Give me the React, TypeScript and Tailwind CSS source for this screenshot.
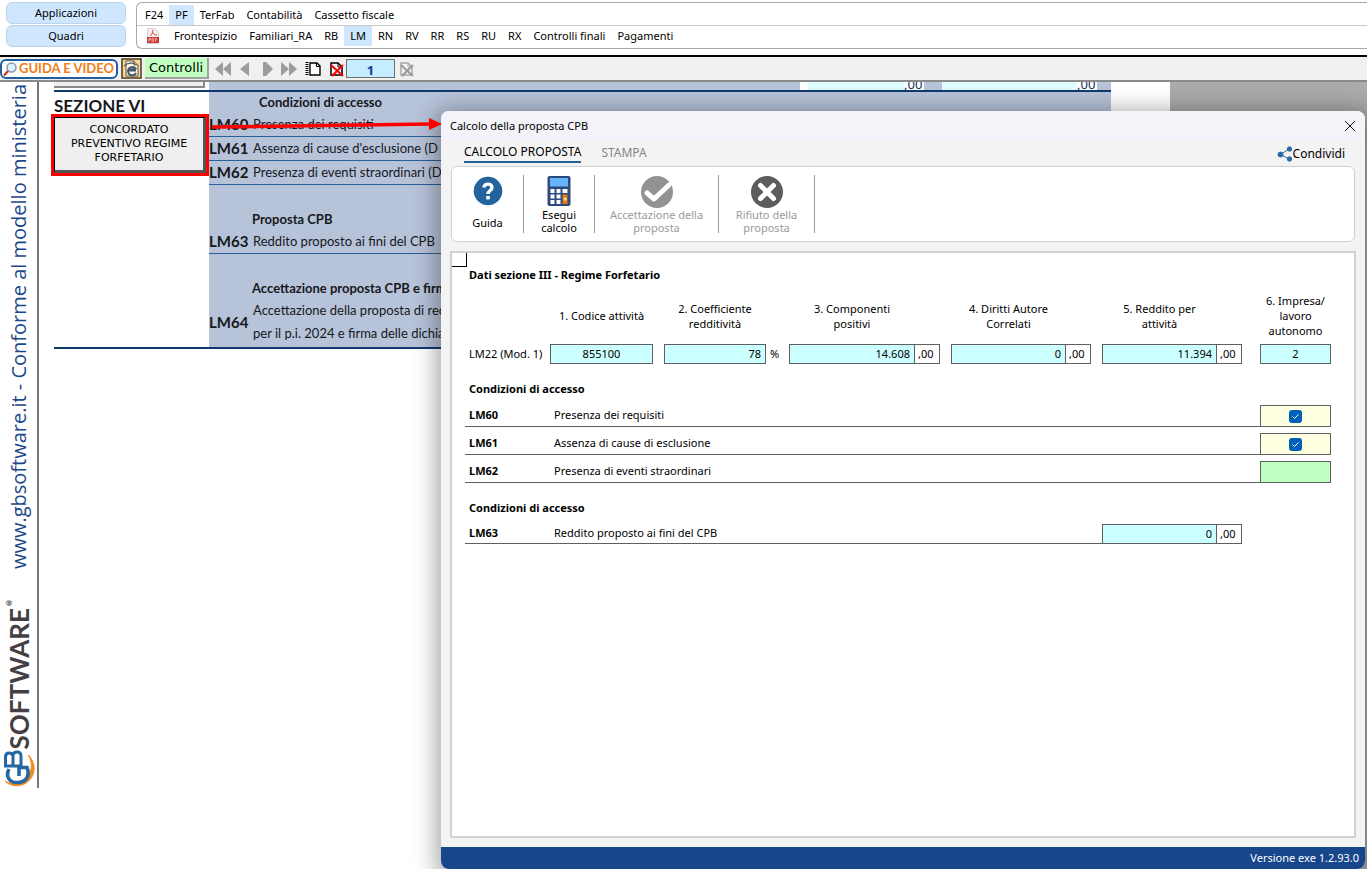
import { ReactNode, useState } from "react"
import clsx from "clsx"

const APPS = ["F24", "PF", "TerFab", "Contabilità", "Cassetto fiscale"]
const QUADRI = ["Frontespizio", "Familiari_RA", "RB", "LM", "RN", "RV", "RR", "RS", "RU", "RX", "Controlli finali", "Pagamenti"]

export default function App() {
  return (
    <div className="flex h-screen flex-col overflow-hidden bg-white font-['Noto_Sans','Open_Sans',sans-serif] text-[11px] text-black">
      <Header />
      <Toolbar />
      <div className="relative flex min-h-0 flex-1 overflow-hidden">
        <SideBrand />
        <ModelForm />
        <div className="grow bg-[#ababab]" />
        <CpbDialog />
        <svg className="pointer-events-none absolute left-[208px] top-[34px] h-[18px] w-[234px]" viewBox="0 0 234 18" aria-hidden="true">
          <path d="M4 11 L223 8" stroke="#f00" strokeWidth="3.5" />
          <path d="M221 2 L234 8 L221 14 Z" fill="#f00" />
        </svg>
      </div>
    </div>
  )
}

function Header() {
  const [app, setApp] = useState("PF")
  const [quadro, setQuadro] = useState("LM")

  return (
    <header className="flex h-[55px] shrink-0 items-start gap-2.5 pl-1.5 pt-0.5">
      <div className="flex w-[120px] shrink-0 flex-col gap-px">
        <button className="h-[22px] rounded-md border border-[#bcd3ea] bg-[#cfe6ff]">Applicazioni</button>
        <button className="h-[22px] rounded-md border border-[#bcd3ea] bg-[#cfe6ff]">Quadri</button>
      </div>
      <nav className="min-w-0 flex-1 rounded-l-md border border-r-0 border-[#a8a8a8]">
        <div className="flex border-b border-[#c8c8c8] pl-0.5 pt-0.5">
          {APPS.map((t) => (
            <TabButton key={t} label={t} active={t === app} onClick={() => setApp(t)} />
          ))}
        </div>
        <div className="flex pb-0.5 pl-2.5">
          <button aria-label="PDF" className="mr-[9px] h-5 w-3">
            <PdfIcon />
          </button>
          {QUADRI.map((t) => (
            <TabButton key={t} label={t} active={t === quadro} onClick={() => setQuadro(t)} />
          ))}
        </div>
      </nav>
    </header>
  )
}

function TabButton({ label, active, onClick }: { label: string; active: boolean; onClick: () => void }) {
  return (
    <button onClick={onClick} className={clsx("h-5 whitespace-nowrap px-1.5", active && "bg-[#cfe6ff]")}>
      {label}
    </button>
  )
}

function Toolbar() {
  return (
    <div className="flex h-[27px] shrink-0 items-center border-b-2 border-t-2 border-b-[#8a8a8a] border-t-black bg-[#f0f0f0]">
      <button className="flex h-5 w-[118px] shrink-0 items-center gap-px rounded-md border-2 border-[#1f5f9f] bg-white font-['Lato',sans-serif] text-[13px] font-bold text-[#f07d14]">
        <svg className="size-4 shrink-0" viewBox="0 0 16 16" fill="none" aria-hidden="true">
          <circle cx="9.5" cy="6.5" r="4.5" fill="#dff1fc" stroke="#7f9db8" strokeWidth="1.5" />
          <path d="M6 10 L2 14.5" stroke="#d8352a" strokeWidth="2.4" />
        </svg>
        <span className="whitespace-nowrap">GUIDA E VIDEO</span>
      </button>
      <button aria-label="Internet" className="ml-[3px] size-[21px] shrink-0">
        <svg viewBox="0 0 21 21" aria-hidden="true">
          <rect x="1" y="1" width="19" height="19" fill="#f6d795" stroke="#4b3a1c" strokeWidth="1.5" />
          <path d="M5 3 H13 L17 7 V18 H5 Z" fill="#fff8e4" stroke="#5b5142" />
          <path d="M13 3 V7 H17" fill="#cfc4a8" stroke="#5b5142" />
          <path d="M15 15 A4.2 4.2 0 1 1 14.5 10.5 L7 12.5 H15" fill="none" stroke="#46586b" strokeWidth="2" />
          <path d="M3 8 C7 4 12 5 14 6" fill="none" stroke="#46586b" strokeWidth="1.2" />
        </svg>
      </button>
      <button className="ml-[3px] h-[21px] w-16 shrink-0 border-b-2 border-r-2 border-[#a3a3a3] bg-[#c1ffc1] font-['DejaVu_Sans',sans-serif] text-[13px] leading-5">
        Controlli
      </button>
      <div className="ml-1.5 flex shrink-0 items-center gap-1.5 text-[#9c9c9c]">
        <NavButton label="Primo" d="M8 0 V14 L0 7 Z M16 0 V14 L8 7 Z" />
        <NavButton label="Precedente" d="M12 0 V14 L3 7 Z" />
        <NavButton label="Successivo" d="M4 0 H7 L14 7 L7 14 H4 Z" />
        <NavButton label="Ultimo" d="M0 0 V14 L8 7 Z M8 0 V14 L16 7 Z" />
      </div>
      <button aria-label="Nuovo modulo" className="ml-2 size-4 shrink-0">
        <svg viewBox="0 0 16 16" fill="none" aria-hidden="true">
          <path d="M5 2 H12 L15 5 V14 H5 Z" fill="#fff" stroke="#000" strokeWidth="1.4" />
          <path d="M11.5 2 V5.5 H15" stroke="#000" />
          <path d="M2 1 V15" stroke="#000" strokeWidth="3" strokeDasharray="1 1" />
        </svg>
      </button>
      <button aria-label="Elimina modulo" className="ml-2 size-4 shrink-0">
        <DeletePageIcon page="#000" cross="#f00" />
      </button>
      <input
        aria-label="Modulo"
        defaultValue="1"
        className="ml-px h-[19px] w-[49px] shrink-0 border border-[#6f6f6f] bg-[#c5ecff] pt-0.5 text-center text-[13px] font-bold leading-4 text-[#0b3f9e]"
      />
      <button aria-label="Annulla" disabled className="ml-1 size-4 shrink-0">
        <DeletePageIcon page="#a8a8a8" cross="#999" />
      </button>
    </div>
  )
}

function NavButton({ label, d }: { label: string; d: string }) {
  return (
    <button aria-label={label} className="h-3.5 w-4">
      <svg viewBox="0 0 16 14" fill="currentColor" aria-hidden="true">
        <path d={d} />
      </svg>
    </button>
  )
}

function SideBrand() {
  return (
    <aside className="flex w-[54px] shrink-0 flex-col">
      <div className="flex h-[706px] w-[39px] flex-col items-center justify-end border-r-2 border-[#777]">
        <span className="rotate-180 whitespace-nowrap font-['Open_Sans',sans-serif] text-[20px] leading-6 text-[#1d4789] [writing-mode:vertical-rl]">
          www.gbsoftware.it - Conforme al modello ministeria
        </span>
        <span className="mt-7 flex rotate-180 items-start font-['Lato',sans-serif] text-[26px] font-bold leading-7 text-[#453f43] [writing-mode:vertical-rl]">
          SOFTWARE
          <span className="text-[8px] leading-2">®</span>
        </span>
        <svg className="h-[39px] w-9 shrink-0" viewBox="0 0 36 39" fill="none" aria-label="GB">
          <path d="M4 32 C13 41 31 37 33 21 C33.5 15 31 10 27.5 6 C30 11 31 15 30 20 C28 34 14 38 4 32 Z" fill="#f08a1c" stroke="#f08a1c" />
          <path d="M8 20 C4 28 9 34 17 33.500 C26 33 29 26 26 18.500 H18 V27" stroke="#2468a2" strokeWidth="3.6" />
          <path d="M3 17 H20 V7 Q20 3 16 3 Q12 3 12 7 V17 M12 8 Q12 4 8 4 Q4.500 4 4.500 8 V17" stroke="#2468a2" strokeWidth="3" />
        </svg>
      </div>
    </aside>
  )
}

function ModelForm() {
  return (
    <main className="flex w-[1116px] shrink-0 flex-col pr-[59px] font-['Lato',sans-serif] text-[13px] text-[#16181d]">
      <div className="flex h-2 shrink-0">
        <div className="w-[155px] shrink-0 pr-1">
          <div className="h-1.5 border-b-2 border-r-2 border-[#8a8a8a] bg-[#efefef]" />
        </div>
        <div className="flex flex-1 justify-end overflow-hidden bg-[#b7c3d9] leading-2">
          <AmountStrip className="w-[124px] pl-2" />
          <span className="w-[18px]" />
          <AmountStrip className="w-[155px]" />
          <span className="w-3.5" />
        </div>
      </div>
      <div className="flex h-[259px] shrink-0 border-b-2 border-t-2 border-[#0f3a6e]">
        <div className="w-[155px] shrink-0">
          <h2 className="pt-0.5 text-[17px] font-bold leading-6">SEZIONE VI</h2>
          <button className="-ml-[3px] -mt-1 block h-[62px] w-[158px] border-3 border-[#f00] font-['DejaVu_Sans',sans-serif] text-[11px] leading-3.5 text-black">
            <span className="flex h-full items-center justify-center border border-b-3 border-r-3 border-b-[#555] border-l-black border-r-[#555] border-t-black bg-[#efefef]">
              CONCORDATO
              <br />
              PREVENTIVO REGIME
              <br />
              FORFETARIO
            </span>
          </button>
        </div>
        <div className="flex flex-1 flex-col bg-[#b7c3d9]">
          <FormRow code="LM60" title="Condizioni di accesso" indent>Presenza dei requisiti</FormRow>
          <FormRow code="LM61">Assenza di cause d'esclusione (D</FormRow>
          <FormRow code="LM62">Presenza di eventi straordinari (D</FormRow>
          <div className="h-6" />
          <FormRow code="LM63" title="Proposta CPB">Reddito proposto ai fini del CPB</FormRow>
          <div className="h-6" />
          <FormRow code="LM64" title="Accettazione proposta CPB e firma" last>
            Accettazione della proposta di reddito
            <br />
            per il p.i. 2024 e firma delle dichiarazioni
          </FormRow>
        </div>
      </div>
    </main>
  )
}

function AmountStrip({ className }: { className: string }) {
  return (
    <span className={clsx("flex bg-white", className)}>
      <span className="flex-1 bg-[#defbfd]" />
      <span className="w-5 -translate-y-0.5 font-['Noto_Sans',sans-serif] text-[#16345c]">,00</span>
    </span>
  )
}

interface FormRowProps {
  code: string
  title?: string
  indent?: boolean
  last?: boolean
  children: ReactNode
}

function FormRow({ code, title, indent, last, children }: FormRowProps) {
  return (
    <div className={clsx("whitespace-nowrap", !last && "border-b border-[#2c5f96]")}>
      {title && <h3 className={clsx("font-bold leading-[21px]", indent ? "pl-[50px]" : "pl-[43px]")}>{title}</h3>}
      <div className="flex items-center leading-[23px]">
        <b className="w-11 text-[15px]">{code}</b>
        <span>{children}</span>
      </div>
    </div>
  )
}

function CpbDialog() {
  return (
    <section
      role="dialog"
      aria-label="Calcolo della proposta CPB"
      className="absolute bottom-0 left-[441px] right-0.5 top-[29px] flex flex-col overflow-hidden rounded-lg bg-[#f3f3f3] shadow-[0_4px_22px_6px_rgba(0,0,0,0.32)]"
    >
      <div className="flex h-[30px] shrink-0 items-center justify-between bg-[#f3f3f9] pl-[9px] pr-[7px]">
        <h1>Calcolo della proposta CPB</h1>
        <button aria-label="Chiudi" className="size-4 p-0.5">
          <svg viewBox="0 0 12 12" fill="none" stroke="#111" aria-hidden="true">
            <path d="M1 1 L11 11 M11 1 L1 11" />
          </svg>
        </button>
      </div>

      <div className="flex h-[25px] shrink-0 items-start justify-between pl-[23px] pr-5 text-[12px]">
        <div role="tablist" className="flex gap-5 pt-0.5">
          <button role="tab" aria-selected="true" className="h-5 border-b-2 border-[#22639e] leading-[18px]">CALCOLO PROPOSTA</button>
          <button role="tab" aria-selected="false" className="h-5 leading-[18px] text-[#858585]">STAMPA</button>
        </div>
        <button className="flex items-center pt-1">
          <ShareIcon />
          Condividi
        </button>
      </div>

      <div className="mx-2.5 flex h-[76px] shrink-0 items-center rounded-md border border-[#cfcfcf] bg-white">
        <ToolButton className="w-[72px]" icon={<HelpIcon />}>
          <span className="pt-1">Guida</span>
        </ToolButton>
        <ToolButton className="w-[71px]" icon={<CalculatorIcon />}>Esegui<br />calcolo</ToolButton>
        <ToolButton className="w-[124px]" icon={<AcceptIcon />} disabled>Accettazione della<br />proposta</ToolButton>
        <ToolButton className="w-24" icon={<RejectIcon />} disabled>Rifiuto della<br />proposta</ToolButton>
      </div>

      <div className="m-[9px] min-h-0 flex-1 overflow-hidden border-2 border-[#d1d1d1] bg-white">
        <div className="h-3.5 w-[15px] border-b border-r border-black" />
        <div className="pl-[13px] pr-[23px]">
          <h2 className="pl-1 font-bold leading-4">Dati sezione III - Regime Forfetario</h2>
          <IncomeTable />

          <h2 className="pb-px pl-1 pt-4 font-bold leading-[18px]">Condizioni di accesso</h2>
          <ConditionRow id="lm60" code="LM60" text="Presenza dei requisiti" checked />
          <ConditionRow id="lm61" code="LM61" text="Assenza di cause di esclusione" checked />
          <ConditionRow id="lm62" code="LM62" text="Presenza di eventi straordinari" />

          <h2 className="pb-[7px] pl-1 pt-4 font-bold leading-[18px]">Condizioni di accesso</h2>
          <div className="mr-[89px] flex items-end">
            <label htmlFor="lm63" className="flex h-5 flex-1 items-center border-b border-[#5f5f5f] pl-1">
              <b className="w-[85px]">LM63</b>
              Reddito proposto ai fini del CPB
            </label>
            <div className="w-[140px]">
              <Amount id="lm63" label="Reddito proposto" value="0" />
            </div>
          </div>
        </div>
      </div>

      <footer className="h-[22px] shrink-0 bg-[#18468b] px-1.5 text-right leading-[22px] text-white">Versione exe 1.2.93.0</footer>
    </section>
  )
}

function ToolButton({ icon, children, className, disabled }: { icon: ReactNode; children: ReactNode; className: string; disabled?: boolean }) {
  return (
    <button
      disabled={disabled}
      className={clsx("flex h-[58px] flex-col items-center border-r border-[#9a9a9a] pt-px leading-[13px] disabled:text-[#9b9b9b]", className)}
    >
      {icon}
      {children}
    </button>
  )
}

function IncomeTable() {
  return (
    <table className="mt-2 w-full table-fixed">
      <colgroup>
        <col className="w-[85px]" />
        <col className="w-[114px]" />
        <col className="w-[125px]" />
        <col className="w-[162px]" />
        <col className="w-[151px]" />
        <col className="w-[158px]" />
        <col className="w-[71px]" />
      </colgroup>
      <thead>
        <tr className="h-[49px] leading-[15px]">
          <td />
          <th scope="col" className="pr-[11px] font-normal">1. Codice attività</th>
          <th scope="col" className="pr-[23px] font-normal">2. Coefficiente<br />redditività</th>
          <th scope="col" className="pr-9 font-normal">3. Componenti<br />positivi</th>
          <th scope="col" className="pr-9 font-normal">4. Diritti Autore<br />Correlati</th>
          <th scope="col" className="pr-[43px] font-normal">5. Reddito per<br />attività</th>
          <th scope="col" className="font-normal">6. Impresa/<br />lavoro<br />autonomo</th>
        </tr>
      </thead>
      <tbody>
        <tr>
          <th scope="row" className="whitespace-nowrap pl-1 pt-1 text-left font-normal">LM22 (Mod. 1)</th>
          <td className="pr-[11px] pt-1">
            <Field label="Codice attività" value="855100" align="text-center" />
          </td>
          <td className="pt-1">
            <div className="flex items-center pr-2.5">
              <Field label="Coefficiente redditività" value="78" align="text-right" />
              <span className="w-[13px] shrink-0 pl-1">%</span>
            </div>
          </td>
          <td className="pr-[11px] pt-1"><Amount id="componenti" label="Componenti positivi" value="14.608" /></td>
          <td className="pr-[11px] pt-1"><Amount id="diritti" label="Diritti Autore Correlati" value="0" /></td>
          <td className="pr-[18px] pt-1"><Amount id="reddito" label="Reddito per attività" value="11.394" /></td>
          <td className="pt-1"><Field label="Impresa/lavoro autonomo" value="2" align="text-center" /></td>
        </tr>
      </tbody>
    </table>
  )
}

function Field({ id, label, value, align }: { id?: string; label: string; value: string; align: string }) {
  return (
    <input
      id={id}
      aria-label={label}
      defaultValue={value}
      className={clsx("block h-5 w-full min-w-0 border border-[#5f5f5f] bg-[#ccffff] px-1 pb-0.5", align)}
    />
  )
}

// integer part plus the fixed cents box
function Amount({ id, label, value }: { id: string; label: string; value: string }) {
  return (
    <div className="flex">
      <Field id={id} label={label} value={value} align="text-right" />
      <span className="h-5 w-[25px] shrink-0 border border-l-0 border-[#5f5f5f] bg-white pl-[3px] leading-[18px]">,00</span>
    </div>
  )
}

function ConditionRow({ id, code, text, checked = false }: { id: string; code: string; text: string; checked?: boolean }) {
  const [on, setOn] = useState(checked)

  return (
    <div className="flex h-7 items-end">
      <label htmlFor={id} className="flex h-[22px] flex-1 items-center border-b border-[#5f5f5f] pl-1">
        <b className="w-[85px]">{code}</b>
        {text}
      </label>
      <div className={clsx("grid h-[22px] w-[71px] place-items-center border border-[#5f5f5f]", checked ? "bg-[#ffffe1]" : "bg-[#c1ffc1]")}>
        <input
          id={id}
          type="checkbox"
          checked={on}
          onChange={(e) => setOn(e.target.checked)}
          className={clsx("col-start-1 row-start-1 size-[13px] appearance-none rounded-[3px]", on && "bg-[#005fb8]")}
        />
        {on && (
          <svg className="pointer-events-none col-start-1 row-start-1 size-[13px]" viewBox="0 0 13 13" fill="none" aria-hidden="true">
            <path d="M3.500 6.500 L5.500 8.500 L9.500 4.500" stroke="#fff" />
          </svg>
        )}
      </div>
    </div>
  )
}

function PdfIcon() {
  return (
    <svg className="h-4 w-3" viewBox="0 0 12 16" fill="none" aria-hidden="true">
      <path d="M0.500 0.500 H8 L11.500 4 V15.500 H0.500 Z" fill="#f4f2f1" stroke="#d5d0ce" />
      <path d="M3 8 C5 7 6 4 5.500 2 M5.500 4 C6 6 8 7.500 10 7" stroke="#d9483b" />
      <rect y="9" width="12" height="6" fill="#cf3a30" />
      <path d="M2 13.500 V10.500 H3.500 V12 H2 M5 10.500 V13.500 H6.500 V10.500 Z M8.500 13.500 V10.500 H10 M8.500 12 H10" stroke="#f6cfcb" strokeWidth="0.700" />
    </svg>
  )
}

function DeletePageIcon({ page, cross }: { page: string; cross: string }) {
  return (
    <svg viewBox="0 0 16 16" fill="none" aria-hidden="true">
      <path d="M2 2 H9 L13 6 V14 H2 Z" fill="#f5f5f5" stroke={page} strokeWidth="1.500" />
      <path d="M9 2 V6 H13" stroke={page} />
      <path d="M2 4 L14 15 M14 4 L3 15" stroke={cross} strokeWidth="2" />
    </svg>
  )
}

function ShareIcon() {
  return (
    <svg className="size-4" viewBox="0 0 16 16" fill="#2a6aa5" stroke="#2a6aa5" aria-hidden="true">
      <path d="M3.500 8.500 L12 3 M3.500 8.500 L12 13" />
      <circle cx="3.500" cy="8.500" r="2.500" />
      <circle cx="12.500" cy="3" r="2.200" />
      <circle cx="12.500" cy="13" r="2.200" />
    </svg>
  )
}

function HelpIcon() {
  return (
    <svg className="mb-1 size-8 shrink-0" viewBox="0 0 32 32" fill="none" aria-hidden="true">
      <circle cx="16" cy="15" r="14.300" fill="#22639e" />
      <path d="M12 11.500 C12 7 20 7 20 11.500 C20 14.500 16 14.500 16 18" stroke="#fff" strokeWidth="3.400" />
      <rect x="14.200" y="20" width="3.600" height="3.400" fill="#fff" />
    </svg>
  )
}

function CalculatorIcon() {
  return (
    <svg className="size-8 shrink-0" viewBox="0 0 32 32" aria-hidden="true">
      <rect x="4.500" y="0" width="23" height="30" rx="2" fill="#2c4a7c" />
      <rect x="7" y="2" width="18" height="8.500" fill="#66b5fb" />
      <g fill="#fff">
        <rect x="7.500" y="13" width="4" height="4" />
        <rect x="13.500" y="13" width="4" height="4" />
        <rect x="19.500" y="13" width="5" height="4" />
        <rect x="7.500" y="18.500" width="4" height="4" />
        <rect x="13.500" y="18.500" width="4" height="4" />
        <rect x="7.500" y="24" width="4" height="4" />
        <rect x="13.500" y="24" width="4" height="4" />
      </g>
      <rect x="19.500" y="18.500" width="5" height="9.500" fill="#e67a0e" />
      <path d="M20.500 23 H24 M22.200 21.200 V24.800" stroke="#fff" strokeWidth="0.900" />
    </svg>
  )
}

function AcceptIcon() {
  return (
    <svg className="size-8 shrink-0" viewBox="0 0 32 32" fill="none" aria-hidden="true">
      <circle cx="16" cy="16" r="16" fill="#929292" />
      <path d="M6 17 L13 23 L28 9" stroke="#fff" strokeWidth="5" strokeLinecap="round" strokeLinejoin="round" />
    </svg>
  )
}

function RejectIcon() {
  return (
    <svg className="size-8 shrink-0" viewBox="0 0 32 32" fill="none" aria-hidden="true">
      <circle cx="16" cy="16" r="16" fill="#5c5c5c" />
      <path d="M9.500 9.500 L22.500 22.500 M22.500 9.500 L9.500 22.500" stroke="#fff" strokeWidth="5" strokeLinecap="round" />
    </svg>
  )
}
